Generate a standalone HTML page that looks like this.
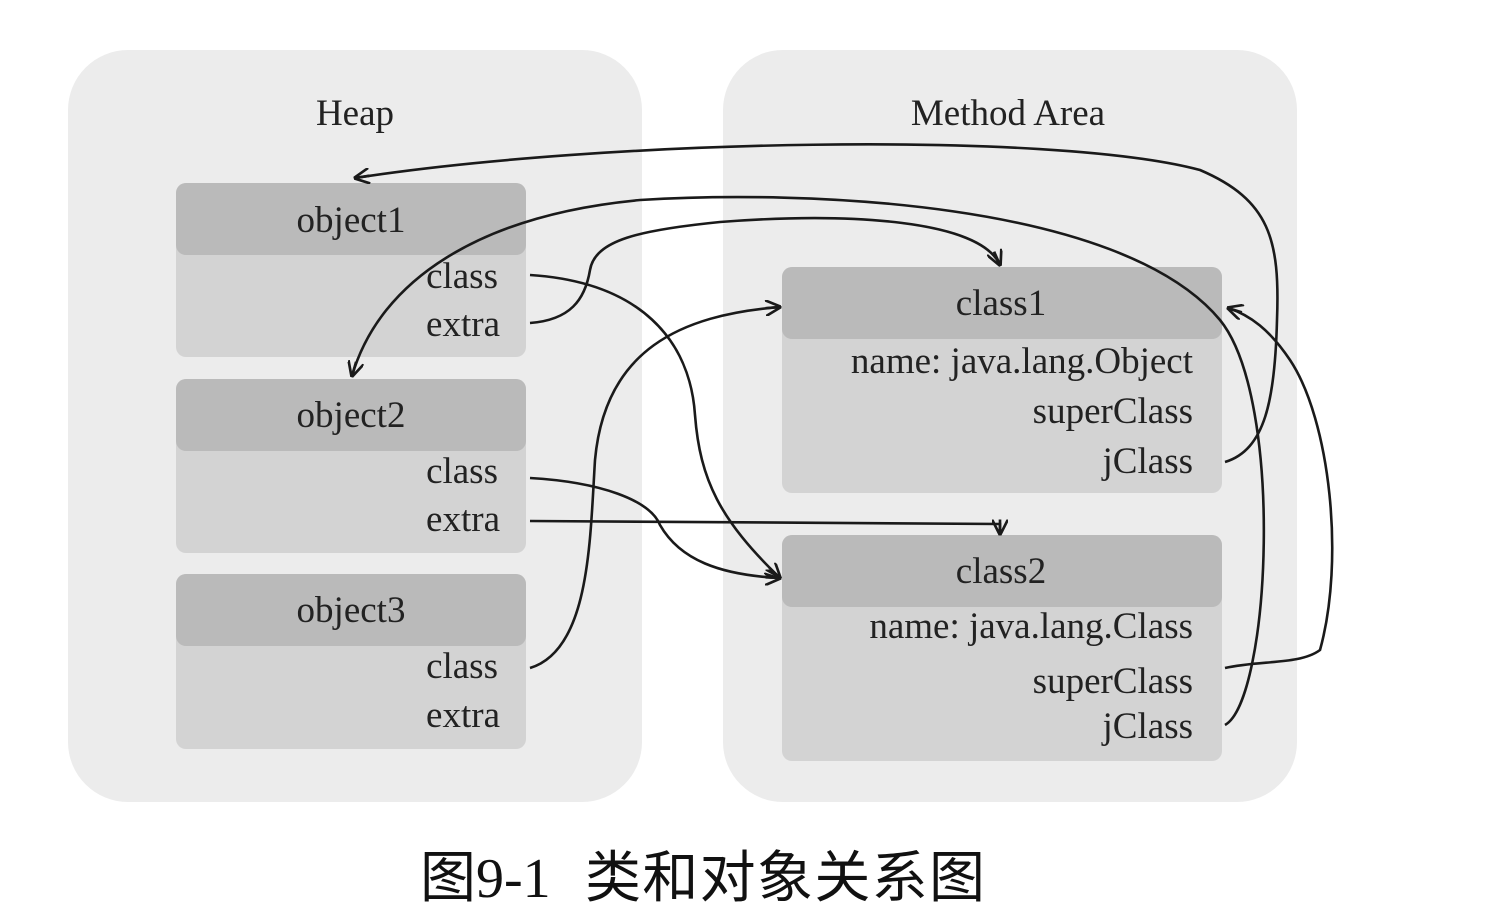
<!DOCTYPE html>
<html><head><meta charset="utf-8"><style>
html,body{margin:0;padding:0;background:#fff;width:1488px;height:904px;overflow:hidden}
svg{display:block}
text{font-family:"Liberation Serif",serif;fill:#222}
</style></head><body>
<svg width="1488" height="904" viewBox="0 0 1488 904">
<defs><marker id="a" viewBox="0 0 12 12" refX="11" refY="6" markerWidth="16" markerHeight="16" markerUnits="userSpaceOnUse" orient="auto"><path d="M0,0 L12,6 L0,12 M12,6 L0,6" fill="none" stroke="#1a1a1a" stroke-width="2"/></marker></defs>
<rect x="68" y="50" width="574" height="752" rx="60" fill="#ececec"/>
<rect x="723" y="50" width="574" height="752" rx="60" fill="#ececec"/>
<text x="355" y="125" font-size="37" text-anchor="middle">Heap</text>
<text x="1008" y="125" font-size="37" text-anchor="middle">Method Area</text>
<g>
<rect x="176" y="183" width="350" height="174" rx="10" fill="#d3d3d3"/><rect x="176" y="183" width="350" height="72" rx="10" fill="#bababa"/>
<rect x="176" y="379" width="350" height="174" rx="10" fill="#d3d3d3"/><rect x="176" y="379" width="350" height="72" rx="10" fill="#bababa"/>
<rect x="176" y="574" width="350" height="175" rx="10" fill="#d3d3d3"/><rect x="176" y="574" width="350" height="72" rx="10" fill="#bababa"/>
<rect x="782" y="267" width="440" height="226" rx="10" fill="#d3d3d3"/><rect x="782" y="267" width="440" height="72" rx="10" fill="#bababa"/>
<rect x="782" y="535" width="440" height="226" rx="10" fill="#d3d3d3"/><rect x="782" y="535" width="440" height="72" rx="10" fill="#bababa"/>
</g>
<g font-size="37">
<text x="351" y="232" text-anchor="middle">object1</text>
<text x="498" y="288" text-anchor="end">class</text><text x="500" y="336" text-anchor="end">extra</text>
<text x="351" y="427" text-anchor="middle">object2</text>
<text x="498" y="483" text-anchor="end">class</text><text x="500" y="531" text-anchor="end">extra</text>
<text x="351" y="622" text-anchor="middle">object3</text>
<text x="498" y="678" text-anchor="end">class</text><text x="500" y="727" text-anchor="end">extra</text>
<text x="1001" y="315" text-anchor="middle">class1</text>
<text x="1193" y="373" text-anchor="end">name: java.lang.Object</text>
<text x="1193" y="423" text-anchor="end">superClass</text>
<text x="1193" y="473" text-anchor="end">jClass</text>
<text x="1001" y="583" text-anchor="middle">class2</text>
<text x="1193" y="638" text-anchor="end">name: java.lang.Class</text>
<text x="1193" y="693" text-anchor="end">superClass</text>
<text x="1193" y="738" text-anchor="end">jClass</text>
</g>
<g fill="none" stroke="#1a1a1a" stroke-width="2.6" marker-end="url(#a)">
<path d="M1225,462 C1265,450 1275,400 1277,320 C1280,240 1270,200 1200,170 C1050,130 600,140 355,178"/>
<path d="M530,323 C570,320 585,300 590,270 C595,240 640,230 720,222 C850,212 980,220 1000,265"/>
<path d="M530,275 C640,282 690,340 695,415 C700,480 720,520 780,578"/>
<path d="M1225,725 C1270,700 1285,400 1220,320 C1120,200 800,190 640,200 C480,215 380,280 352,376"/>
<path d="M530,478 C600,482 650,500 660,525 C680,560 720,575 780,578"/>
<path d="M530,521 L1000,524 L1000,534"/>
<path d="M530,668 C590,650 590,540 595,460 C605,350 680,315 780,307"/>
<path d="M1225,668 C1260,660 1300,665 1320,650 C1345,560 1330,420 1290,360 C1270,330 1250,315 1228,308"/>
</g>
<g style="font-family:'Liberation Serif','Noto Serif CJK SC',serif" font-size="56">
<text x="420" y="897" style="fill:#111">图9-1</text>
<text x="585" y="897" style="fill:#111" textLength="400">类和对象关系图</text>
</g>
</svg>
</body></html>
